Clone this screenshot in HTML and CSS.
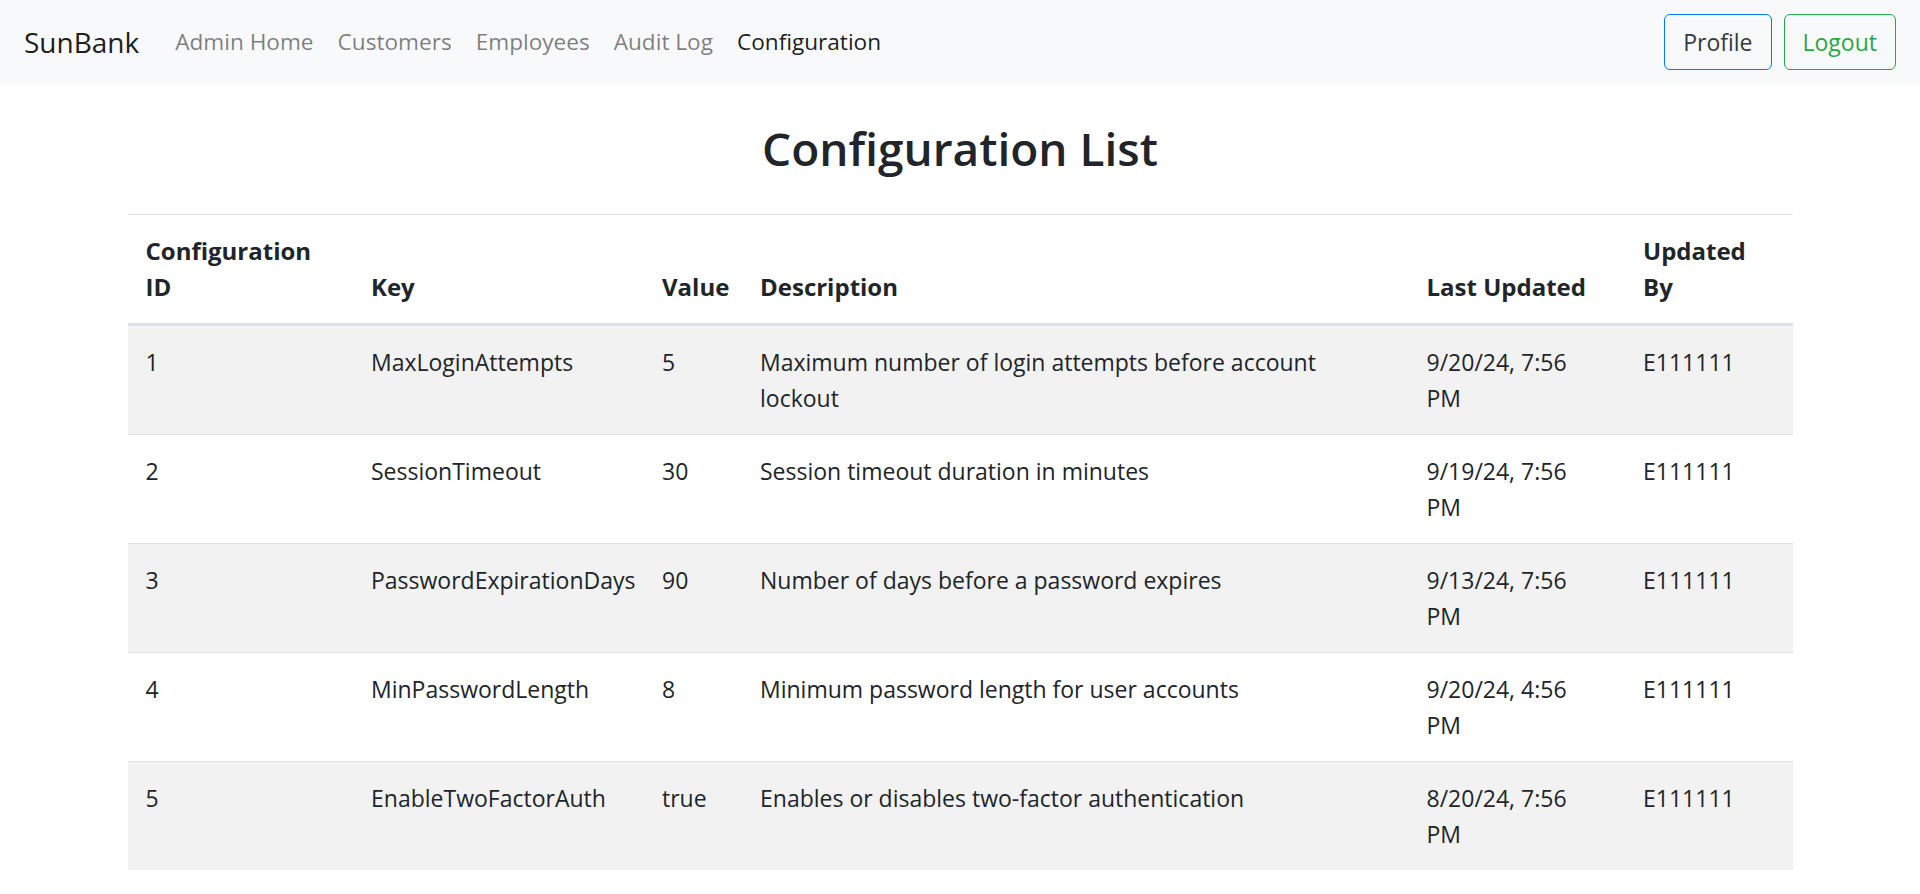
FILE: index.html
```html
<!DOCTYPE html>
<html lang="en">
<head>
<meta charset="utf-8">
<title>SunBank - Configuration List</title>
<link rel="stylesheet" href="styles.css">
</head>
<body>
<nav class="navbar">
  <a class="brand" href="#">SunBank</a>
  <ul class="nav">
    <li><a class="nav-link" href="#">Admin Home</a></li>
    <li><a class="nav-link" href="#">Customers</a></li>
    <li><a class="nav-link" href="#">Employees</a></li>
    <li><a class="nav-link" href="#">Audit Log</a></li>
    <li><a class="nav-link active" href="#">Configuration</a></li>
  </ul>
  <div class="nav-actions">
    <button class="btn btn-profile">Profile</button>
    <button class="btn btn-logout">Logout</button>
  </div>
</nav>
<main class="container">
  <h2 class="title">Configuration List</h2>
  <table class="table">
    <colgroup>
      <col class="c-id">
      <col class="c-key">
      <col class="c-value">
      <col class="c-desc">
      <col class="c-updated">
      <col class="c-by">
    </colgroup>
    <thead>
      <tr>
        <th>Configuration ID</th>
        <th>Key</th>
        <th>Value</th>
        <th>Description</th>
        <th>Last Updated</th>
        <th>Updated By</th>
      </tr>
    </thead>
    <tbody>
      <tr>
        <td>1</td>
        <td>MaxLoginAttempts</td>
        <td>5</td>
        <td>Maximum number of login attempts before account lockout</td>
        <td>9/20/24, 7:56 PM</td>
        <td>E111111</td>
      </tr>
      <tr>
        <td>2</td>
        <td>SessionTimeout</td>
        <td>30</td>
        <td>Session timeout duration in minutes</td>
        <td>9/19/24, 7:56 PM</td>
        <td>E111111</td>
      </tr>
      <tr>
        <td>3</td>
        <td>PasswordExpirationDays</td>
        <td>90</td>
        <td>Number of days before a password expires</td>
        <td>9/13/24, 7:56 PM</td>
        <td>E111111</td>
      </tr>
      <tr>
        <td>4</td>
        <td>MinPasswordLength</td>
        <td>8</td>
        <td>Minimum password length for user accounts</td>
        <td>9/20/24, 4:56 PM</td>
        <td>E111111</td>
      </tr>
      <tr>
        <td>5</td>
        <td>EnableTwoFactorAuth</td>
        <td>true</td>
        <td>Enables or disables two-factor authentication</td>
        <td>8/20/24, 7:56 PM</td>
        <td>E111111</td>
      </tr>
    </tbody>
  </table>
</main>
</body>
</html>
```
FILE: styles.css
```css
* {
  box-sizing: border-box;
}

body {
  margin: 0;
  font-family: "Open Sans", "Noto Sans", "Liberation Sans", sans-serif;
  font-size: 23px;
  line-height: 36px;
  color: #212529;
  background: #fff;
}

a {
  text-decoration: none;
}

.navbar {
  display: flex;
  align-items: center;
  height: 84px;
  padding: 12px 24px;
  background: #f8f9fa;
}

.brand {
  font-size: 28px;
  line-height: 45px;
  padding: 7px 0;
  margin-right: 24px;
  color: rgba(0, 0, 0, 0.9);
}

.nav {
  display: flex;
  list-style: none;
  margin: 0;
  padding: 0;
}

.nav-link {
  display: block;
  padding: 12px 12px;
  font-size: 22.6px;
  color: rgba(0, 0, 0, 0.5);
}

.nav-link.active {
  color: rgba(0, 0, 0, 0.9);
}

.nav-actions {
  margin-left: auto;
  display: flex;
  gap: 12px;
}

.btn {
  font-family: inherit;
  font-size: 23px;
  line-height: 36px;
  padding: 9px 18px;
  border: 1.5px solid;
  border-radius: 6px;
  background: transparent;
  cursor: pointer;
}

.btn-profile {
  border-color: #007bff;
  color: #343a40;
}

.btn-logout {
  border-color: #28a745;
  color: #28a745;
}

.container {
  max-width: 1710px;
  margin: 0 auto;
  padding: 0 22.5px;
}

.title {
  margin: 36px 0;
  font-size: 46px;
  line-height: 57.6px;
  font-weight: 600;
  text-align: center;
}

.table {
  width: 100%;
  table-layout: fixed;
  border-collapse: collapse;
}

.c-id { width: 225.5px; }
.c-key { width: 291px; }
.c-value { width: 98px; }
.c-desc { width: 666.5px; }
.c-updated { width: 216.5px; }
.c-by { width: 167.5px; }

.table th,
.table td {
  padding: 18px;
  text-align: left;
  vertical-align: top;
  border-top: 1.5px solid #dee2e6;
}

.table thead th {
  vertical-align: bottom;
  font-size: 24px;
  font-weight: 700;
  border-bottom: 3px solid #dee2e6;
}

.table tbody tr:nth-child(odd) {
  background: rgba(0, 0, 0, 0.05);
}
```
